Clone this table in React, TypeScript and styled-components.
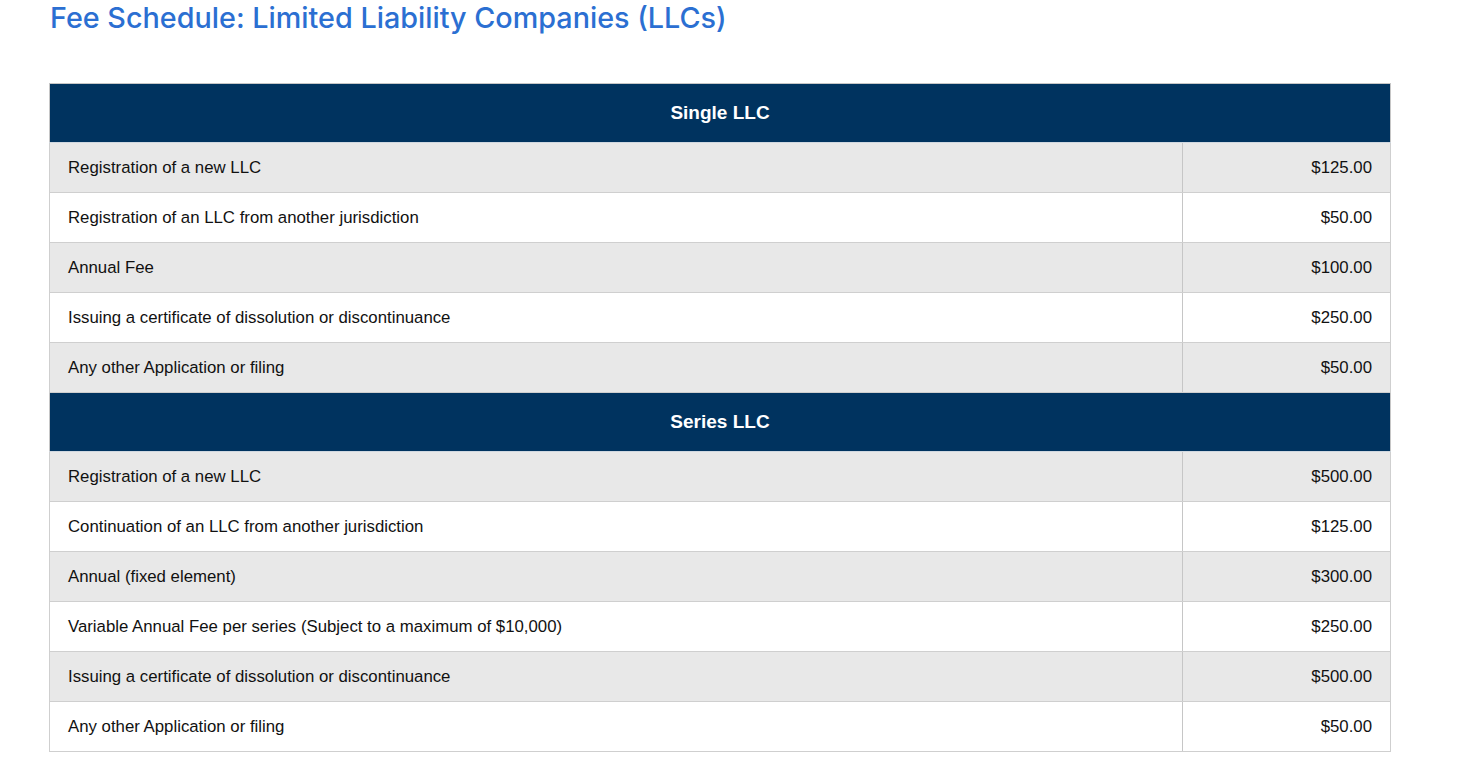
import styled, { createGlobalStyle } from 'styled-components';

const GlobalStyle = createGlobalStyle`
  body {
    margin: 0;
    background: #fff;
    font-family: 'Liberation Sans', Arial, sans-serif;
  }
`;

const Page = styled.div`
  padding: 0 73px 0 49px;
`;

const Title = styled.h1`
  margin: 0;
  padding: 0 0 0 1px;
  height: 83px;
  font-family: Inter, 'Noto Sans', sans-serif;
  font-weight: 500;
  font-size: 28.75px;
  line-height: 36px;
  color: #2b6fd2;
`;

const Table = styled.table`
  width: 1342px;
  border-collapse: collapse;
  font-size: 16.8px;
  color: #111;
`;

const SectionHead = styled.th`
  height: 58px;
  padding: 0;
  background: #00335f;
  color: #fff;
  font-size: 19px;
  font-weight: 700;
  line-height: 20px;
  text-align: center;
  vertical-align: middle;
  border: 1px solid #c6c6c6;
  border-bottom-color: #d0d8e0;
`;

interface RowProps {
  $shaded: boolean;
}

const Row = styled.tr<RowProps>`
  background: ${(p) => (p.$shaded ? '#e8e8e8' : '#fff')};
`;

const Label = styled.td`
  height: 49px;
  padding: 0 18px;
  border: 1px solid #cfcfcf;
  border-right-color: #c6c6c6;
`;

const Amount = styled.td`
  width: 171px;
  padding: 0 18px;
  text-align: right;
  border: 1px solid #cfcfcf;
  border-left-color: #c6c6c6;
`;

const sections = [
  {
    title: 'Single LLC',
    rows: [
      ['Registration of a new LLC', '$125.00'],
      ['Registration of an LLC from another jurisdiction', '$50.00'],
      ['Annual Fee', '$100.00'],
      ['Issuing a certificate of dissolution or discontinuance', '$250.00'],
      ['Any other Application or filing', '$50.00'],
    ],
  },
  {
    title: 'Series LLC',
    rows: [
      ['Registration of a new LLC', '$500.00'],
      ['Continuation of an LLC from another jurisdiction', '$125.00'],
      ['Annual (fixed element)', '$300.00'],
      ['Variable Annual Fee per series (Subject to a maximum of $10,000)', '$250.00'],
      ['Issuing a certificate of dissolution or discontinuance', '$500.00'],
      ['Any other Application or filing', '$50.00'],
    ],
  },
];

export default function App() {
  return (
    <Page>
      <GlobalStyle />
      <Title>Fee Schedule: Limited Liability Companies (LLCs)</Title>
      <Table>
        <tbody>
          {sections.map((section) => [
            <tr key={section.title}>
              <SectionHead colSpan={2}>{section.title}</SectionHead>
            </tr>,
            ...section.rows.map(([label, amount], i) => (
              <Row key={section.title + i} $shaded={i % 2 === 0}>
                <Label>{label}</Label>
                <Amount>{amount}</Amount>
              </Row>
            )),
          ])}
        </tbody>
      </Table>
    </Page>
  );
}
